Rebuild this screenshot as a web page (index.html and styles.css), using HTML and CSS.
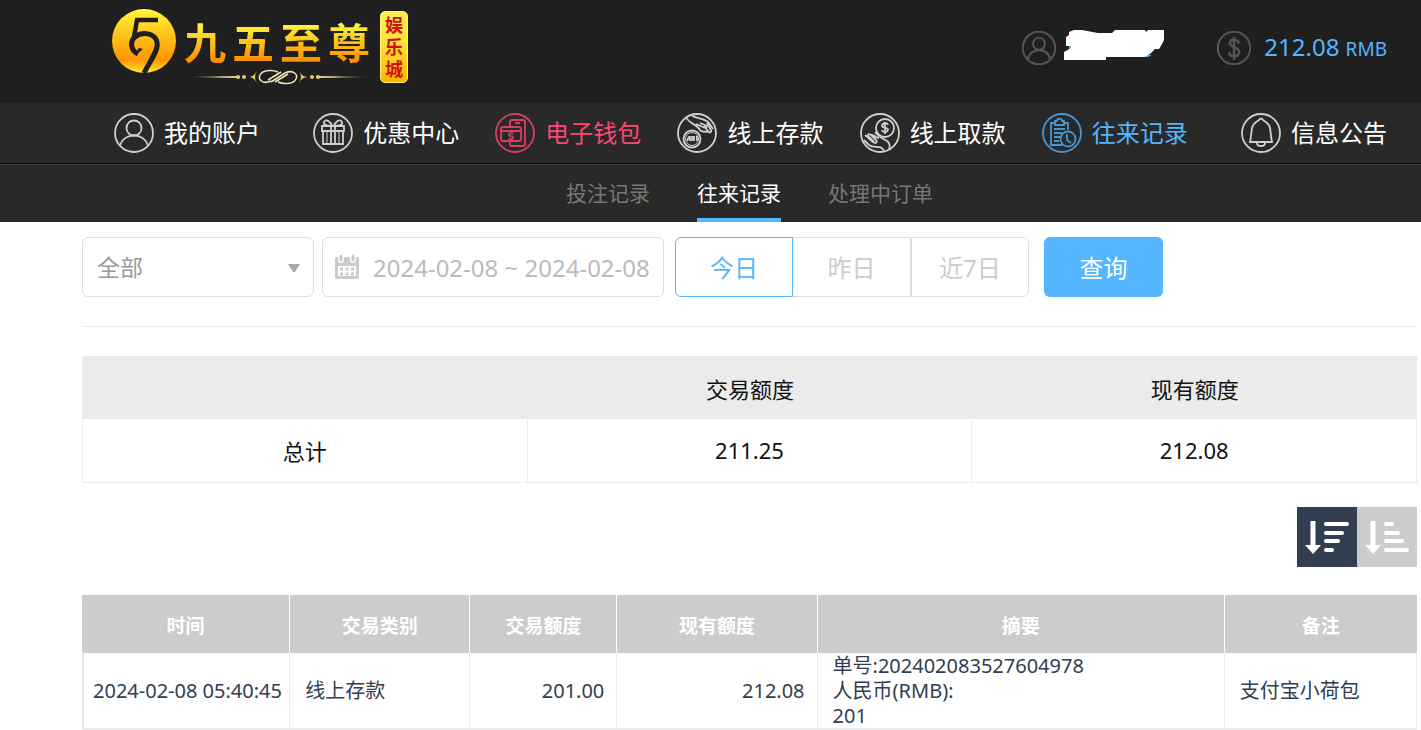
FILE: index.html
```html
<!DOCTYPE html>
<html lang="zh-CN">
<head>
    <meta charset="UTF-8">
    <meta name="viewport" content="width=device-width, initial-scale=1.0">
    <title>往来记录 - 九五至尊娱乐城</title>
    <link rel="stylesheet" href="styles.css">
</head>
<body>
    <header class="header">
        <a class="logo" href="#">
            <svg class="logo-mark" viewBox="0 0 66 66">
                <defs>
                    <linearGradient id="gold" x1="0" y1="0" x2="0" y2="1">
                        <stop offset="0" stop-color="#fff83c"/>
                        <stop offset="0.4" stop-color="#ffc41a"/>
                        <stop offset="0.8" stop-color="#ff9600"/>
                        <stop offset="1" stop-color="#ffec30"/>
                    </linearGradient>
                </defs>
                <circle cx="32" cy="32" r="32" fill="url(#gold)"/>
                <path d="M46 11H25L22 28" fill="none" stroke="#1f1f1f" stroke-width="4.5"/>
                <path d="M26 45C18 41 18 32 23 28C30 22 43 24 45 33C47 41 38 52 32 64" fill="none" stroke="#1f1f1f" stroke-width="5"/>
                <path d="M24 46L31 40L27 39C25 42 24 43 24 46Z" fill="#1f1f1f"/>
            </svg>
            <span class="logo-name">
                <span class="logo-text"><b>九</b><b>五</b><b>至</b><b>尊</b></span>
                <svg class="logo-line" viewBox="0 0 188 16">
                    <defs>
                        <linearGradient id="fade" gradientUnits="userSpaceOnUse" x1="0" y1="0" x2="188" y2="0">
                            <stop offset="0" stop-color="#e9c874" stop-opacity="0"/>
                            <stop offset="0.2" stop-color="#f1dc96"/>
                            <stop offset="0.8" stop-color="#f1dc96"/>
                            <stop offset="1" stop-color="#e9c874" stop-opacity="0"/>
                        </linearGradient>
                    </defs>
                    <path d="M0 8L56 7V9ZM188 8L132 7V9Z" fill="url(#fade)"/>
                    <g fill="#e9c86a">
                        <circle cx="54" cy="8" r="2"/><circle cx="60" cy="8" r="2"/>
                        <circle cx="128" cy="8" r="2"/><circle cx="134" cy="8" r="2"/>
                        <path d="M64 8C69 8 71 5 73 2Q69 8 73 14C71 11 69 8 64 8ZM124 8C119 8 117 5 115 2Q119 8 115 14C117 11 119 8 124 8Z"/>
                    </g>
                    <g fill="none" stroke="#f4e7bc" stroke-width="1.5">
                        <path d="M87 12C78 16 74 10 76 6C79 0 90 1 94 3M101 4C110 0 114 6 112 10C109 16 98 15 94 13"/>
                        <path d="M84 11L97 3M87 13L101 4M91 13L104 5"/>
                    </g>
                </svg>
            </span>
            <span class="logo-tag"><b>娱</b><b>乐</b><b>城</b></span>
        </a>
        <div class="account">
            <svg class="account-icon" viewBox="0 0 40 40">
                <circle cx="20" cy="20" r="19"/>
                <circle cx="20" cy="15" r="7"/>
                <path d="M7 33C9 19 31 19 33 33"/>
            </svg>
            <svg class="account-name" viewBox="0 0 100 30">
                <path d="M5 15L9 16V19H5ZM76 25H88L84 27H79Z" fill="#54b6ff"/>
                <path d="M0 30V22L7 18V16H2V7L5 5V2L10 0H18L34 3H48L51 0H81L82 2L84 0H100V10L98 14L95 19H91L86 24L80 27H42V30Z" fill="#fff"/>
            </svg>
            <svg class="account-icon money-icon" viewBox="0 0 40 40">
                <circle cx="20" cy="20" r="19"/>
                <path d="M26 15C25 9 15 9 15 14C15 20 26 18 26 25C26 31 15 31 14 25M20 7V34" stroke-width="3"/>
            </svg>
            <span class="balance">212.08 <small>RMB</small></span>
        </div>
    </header>

    <nav class="nav">
        <a href="#">
            <svg viewBox="0 0 40 40">
                <circle cx="20" cy="20" r="19"/>
                <circle cx="20" cy="15" r="7.5"/>
                <path d="M6 33C9 19 31 19 34 33"/>
            </svg>
            我的账户
        </a>
        <a href="#">
            <svg viewBox="0 0 40 40">
                <circle cx="20" cy="20" r="19"/>
                <path d="M9 13H31V18H9ZM10 18V31H30V18M18 13V31M22 13V31"/>
                <path d="M14 18V31M26 18V31" stroke-width="1"/>
                <path d="M19 13C14 13 10 12 11 9C13 5 18 9 19 13ZM21 13C26 13 30 12 29 9C27 5 22 9 21 13Z"/>
            </svg>
            优惠中心
        </a>
        <a class="wallet" href="#">
            <svg viewBox="0 0 40 40">
                <circle cx="20" cy="20" r="19"/>
                <path d="M15 13V9Q15 7 17 7H28Q30 7 30 9V31Q30 33 28 33H17Q15 33 15 31V29M20 10H25"/>
                <path d="M8 14H24Q26 14 26 16V26Q26 28 24 28H8Q6 28 6 26V16Q6 14 8 14ZM6 18H26"/>
                <path d="M18 21C17 19 14 20 14 22C15 24 18 22 18 25C17 27 14 26 14 25"/>
            </svg>
            电子钱包
        </a>
        <a href="#">
            <svg viewBox="0 0 40 40">
                <circle cx="20" cy="20" r="19"/>
                <circle cx="15" cy="26" r="8.5"/>
                <circle cx="15" cy="26" r="6.5" stroke-width="1"/>
                <path d="M10 28L12 24H13L13 28M15 28V24H17V28M19 24H20V28"/>
                <path d="M9 4C12 11 20 11 23 17C25 20 30 18 32 19M15 2C17 6 27 4 32 10L36 16M19 11L26 14C30 16 31 13 28 12L23 10M30 10L34 17C35 20 32 20 31 18L27 13"/>
            </svg>
            线上存款
        </a>
        <a href="#">
            <svg viewBox="0 0 40 40">
                <circle cx="20" cy="20" r="19"/>
                <circle cx="25" cy="15" r="9"/>
                <path d="M28 12C27 9 22 10 22 13C23 16 28 14 28 17C27 20 22 19 22 17M25 9V21"/>
                <path d="M5 22L13 29C16 31 18 29 16 27L11 22C8 20 7 22 9 24L14 29M11 22C15 21 18 28 19 23L15 19M20 24L27 28C30 30 30 34 29 37M4 27L9 32C14 36 21 31 24 38"/>
            </svg>
            线上取款
        </a>
        <a class="active" href="#">
            <svg viewBox="0 0 40 40">
                <circle cx="20" cy="20" r="19"/>
                <path d="M13 10H9V32H20M21 10H26V17M13 8H15C15 5 20 5 20 8H22V12H13ZM12 16H23M12 20H20M12 24H18M12 28H17"/>
                <circle cx="26" cy="26" r="7.5"/>
                <path d="M25 21V27L29 30"/>
            </svg>
            往来记录
        </a>
        <a href="#">
            <svg viewBox="0 0 40 40">
                <circle cx="20" cy="20" r="19"/>
                <path d="M9 29C10 25 10 21 11 15C12 10 15 9 18 7Q20 4 22 7C25 9 28 10 29 15C30 21 30 25 31 29Z"/>
                <path d="M16 30C16 34 24 34 24 30"/>
            </svg>
            信息公告
        </a>
    </nav>

    <nav class="subnav">
        <a href="#">投注记录</a>
        <a class="active" href="#">往来记录</a>
        <a href="#">处理中订单</a>
    </nav>

    <main class="content">
        <form class="filters">
            <div class="select-box">
                <select aria-label="交易类别">
                    <option>全部</option>
                </select>
                <svg class="arrow" viewBox="0 0 12 8"><path d="M0 0H12L7 8H5Z"/></svg>
            </div>
            <label class="date-box">
                <svg viewBox="0 0 26 26">
                    <path d="M1 5Q1 3 3 3H23Q25 3 25 5V23Q25 25 23 25H3Q1 25 1 23Z" fill="#ccc"/>
                    <path d="M4 12H22V22H4Z" fill="#fff"/>
                    <path d="M7 1V6M19 1V6" stroke="#fff" stroke-width="6" stroke-linecap="round"/>
                    <path d="M7 2V6M19 2V6" stroke="#ccc" stroke-width="3" stroke-linecap="round"/>
                    <path d="M6 15H20M6 20H20" stroke="#ccc" stroke-width="3" stroke-dasharray="3 2.5"/>
                </svg>
                <input type="text" aria-label="日期" value="2024-02-08 ~ 2024-02-08" readonly>
            </label>
            <div class="range">
                <button type="button" class="selected">今日</button>
                <button type="button">昨日</button>
                <button type="button">近7日</button>
            </div>
            <button type="button" class="search">查询</button>
        </form>

        <table class="summary">
            <thead>
                <tr><th></th><th>交易额度</th><th>现有额度</th></tr>
            </thead>
            <tbody>
                <tr><td>总计</td><td>211.25</td><td>212.08</td></tr>
            </tbody>
        </table>

        <div class="sort">
            <button type="button" class="selected" aria-label="降序">
                <svg viewBox="0 0 60 60">
                    <path d="M16 14V42" stroke-width="5"/>
                    <path d="M8 38H24L16 47Z" fill="#fff" stroke="none"/>
                    <path d="M29 17H50M29 26H45M29 34H41M29 43H35" stroke-width="4" stroke-linecap="round"/>
                </svg>
            </button>
            <button type="button" aria-label="升序">
                <svg viewBox="0 0 60 60">
                    <path d="M16 14V42" stroke-width="5"/>
                    <path d="M8 38H24L16 47Z" fill="#fff" stroke="none"/>
                    <path d="M29 17H35M29 26H41M29 34H45M29 43H50" stroke-width="4" stroke-linecap="round"/>
                </svg>
            </button>
        </div>

        <table class="records">
            <thead>
                <tr>
                    <th class="col-time">时间</th>
                    <th class="col-type">交易类别</th>
                    <th class="col-amount">交易额度</th>
                    <th class="col-balance">现有额度</th>
                    <th class="col-summary">摘要</th>
                    <th>备注</th>
                </tr>
            </thead>
            <tbody>
                <tr>
                    <td class="time">2024-02-08 05:40:45</td>
                    <td>线上存款</td>
                    <td class="number">201.00</td>
                    <td class="number">212.08</td>
                    <td>单号:202402083527604978<br>人民币(RMB):<br>201</td>
                    <td>支付宝小荷包</td>
                </tr>
            </tbody>
        </table>
    </main>
</body>
</html>
```

FILE: styles.css
```css
* {
    box-sizing: border-box;
}

body {
    margin: 0;
    font-family: "Noto Sans", "Noto Sans CJK SC", sans-serif;
    background: #fff;
    color: #111;
}

a {
    color: inherit;
    text-decoration: none;
}

button,
input,
select {
    font-family: inherit;
    margin: 0;
}

button {
    cursor: pointer;
}

/* header */
.header {
    display: flex;
    justify-content: space-between;
    align-items: flex-start;
    height: 103px;
    padding: 9px 34px 0 112px;
    background: #1f1f1f;
}

.logo {
    display: flex;
    align-items: flex-start;
}

.logo-mark {
    width: 66px;
    height: 66px;
}

.logo-name {
    display: flex;
    flex-direction: column;
    margin: 8px 8px 0 6px;
}

.logo-text {
    display: flex;
    gap: 6px;
    font-family: "Noto Sans CJK SC", sans-serif;
    font-size: 42px;
    line-height: 48px;
    color: transparent;
    background: linear-gradient(#fff53c 15%, #ffc41a 50%, #ff9000 90%);
    -webkit-background-clip: text;
    background-clip: text;
}

.logo-line {
    width: 188px;
    height: 16px;
    margin-top: 4px;
}

.logo-tag {
    display: flex;
    flex-direction: column;
    align-items: center;
    width: 28px;
    margin-top: 2px;
    padding: 1px 0 3px;
    border: 1px solid #fff27a;
    border-radius: 5px;
    background: linear-gradient(#ffef50, #ffe030 50%, #ffb400);
    color: #d01010;
    font-family: "Noto Sans CJK SC", sans-serif;
    font-size: 18px;
    line-height: 22px;
}

.account {
    display: flex;
    align-items: center;
    padding-top: 21px;
}

.account-icon {
    width: 34px;
    height: 34px;
    fill: none;
    stroke: #555;
    stroke-width: 2.4;
}

.account-name {
    width: 100px;
    height: 30px;
    margin: 0 53px 6px 8px;
}

.money-icon {
    margin-right: 13px;
}

.balance {
    color: #54b6ff;
    font-size: 24px;
    line-height: 34px;
}

.balance small {
    font-size: 19px;
}

/* main menu */
.nav {
    display: flex;
    justify-content: space-between;
    align-items: center;
    height: 61px;
    padding: 0 34px 0 114px;
    background: #292929;
    border-bottom: 1px solid #111;
}

.nav a {
    display: flex;
    align-items: center;
    gap: 10px;
    color: #fff;
    font-size: 24px;
    line-height: 36px;
}

.nav a:first-child {
    margin-right: 17px;
}

.nav a:last-child {
    margin-left: 17px;
}

.nav svg {
    width: 40px;
    height: 40px;
    fill: none;
    stroke: #d0d0d0;
    stroke-width: 1.8;
}

.nav .wallet {
    color: #ff476f;
}

.nav .wallet svg {
    stroke: #d83f61;
}

.nav .active {
    color: #54b6ff;
}

.nav .active svg {
    stroke: #4596d4;
}

.subnav {
    display: flex;
    justify-content: center;
    gap: 47px;
    height: 58px;
    padding: 0 34px 0 112px;
    background: #292929;
    border-top: 1px solid #383838;
    color: #777;
    font-size: 21px;
    line-height: 56px;
}

.subnav .active {
    color: #fff;
    border-bottom: 4px solid #54b6ff;
}

/* filters */
.content {
    padding: 15px 4px 0 82px;
}

.filters {
    display: flex;
    padding-bottom: 29px;
    border-bottom: 1px solid #ebebeb;
}

.select-box {
    position: relative;
    width: 232px;
    margin-right: 8px;
}

.select-box select {
    width: 100%;
    height: 60px;
    padding: 0 14px;
    border: 1px solid #ddd;
    border-radius: 6px;
    background: #fff;
    color: #999;
    font-size: 23px;
    appearance: none;
}

.arrow {
    position: absolute;
    top: 27px;
    right: 14px;
    width: 12px;
    height: 8px;
    fill: #aaa;
    pointer-events: none;
}

.date-box {
    display: flex;
    align-items: center;
    width: 342px;
    height: 60px;
    margin-right: 11px;
    padding-left: 11px;
    border: 1px solid #ddd;
    border-radius: 6px;
}

.date-box svg {
    width: 26px;
    height: 26px;
    margin-right: 13px;
    flex-shrink: 0;
}

.date-box input {
    width: 100%;
    padding: 0;
    border: 0;
    outline: 0;
    color: #bbb;
    font-size: 24px;
}

.range {
    display: flex;
    margin-right: 15px;
}

.range button {
    width: 118px;
    height: 60px;
    padding: 0 0 2px;
    border: 1px solid #ddd;
    border-left-width: 0;
    background: #fff;
    color: #ccc;
    font-size: 24px;
}

.range button:last-child {
    border-left-width: 1px;
    border-radius: 0 6px 6px 0;
}

.range .selected {
    border: 1px solid #54b6ff;
    border-radius: 6px 0 0 6px;
    color: #54b6ff;
}

.search {
    width: 119px;
    height: 60px;
    padding: 0 0 2px;
    border: 0;
    border-radius: 6px;
    background: #54b6ff;
    color: #fff;
    font-size: 24px;
}

/* tables */
table {
    width: 100%;
    table-layout: fixed;
    border-collapse: separate;
    border-spacing: 0;
}

.summary {
    margin-top: 29px;
    border-left: 1px solid #ebebeb;
    font-size: 22px;
    text-align: center;
}

.summary th {
    height: 63px;
    padding: 0;
    background: #ebebeb;
    font-weight: normal;
}

.summary td {
    height: 64px;
    padding: 0 0 2px;
    border-right: 1px solid #ebebeb;
    border-bottom: 1px solid #ebebeb;
}

.sort {
    display: flex;
    justify-content: flex-end;
    margin: 24px 0 28px;
}

.sort button {
    width: 60px;
    height: 60px;
    padding: 0;
    border: 0;
    background: #ccc;
}

.sort .selected {
    background: #303e50;
}

.sort svg {
    display: block;
    fill: none;
    stroke: #fff;
}

.records {
    color: #303e50;
    font-size: 20px;
    line-height: 25px;
}

.records th {
    height: 58px;
    padding: 4px 0 0;
    border-right: 1px solid #fff;
    background: #ccc;
    color: #fff;
    font-size: 19px;
}

.records th:last-child {
    border-right: 0;
}

.records td {
    height: 76px;
    padding: 0 0 0 15px;
    border-right: 1px solid #ebebeb;
    border-bottom: 2px solid #ebebeb;
}

.records .time {
    padding-left: 9px;
    border-left: 2px solid #ebebeb;
    white-space: nowrap;
}

.records .number {
    padding-right: 12px;
    text-align: right;
}

.col-time {
    width: 15.6%;
}

.col-type {
    width: 13.5%;
}

.col-amount {
    width: 11%;
}

.col-balance {
    width: 15%;
}

.col-summary {
    width: 30.5%;
}
```
